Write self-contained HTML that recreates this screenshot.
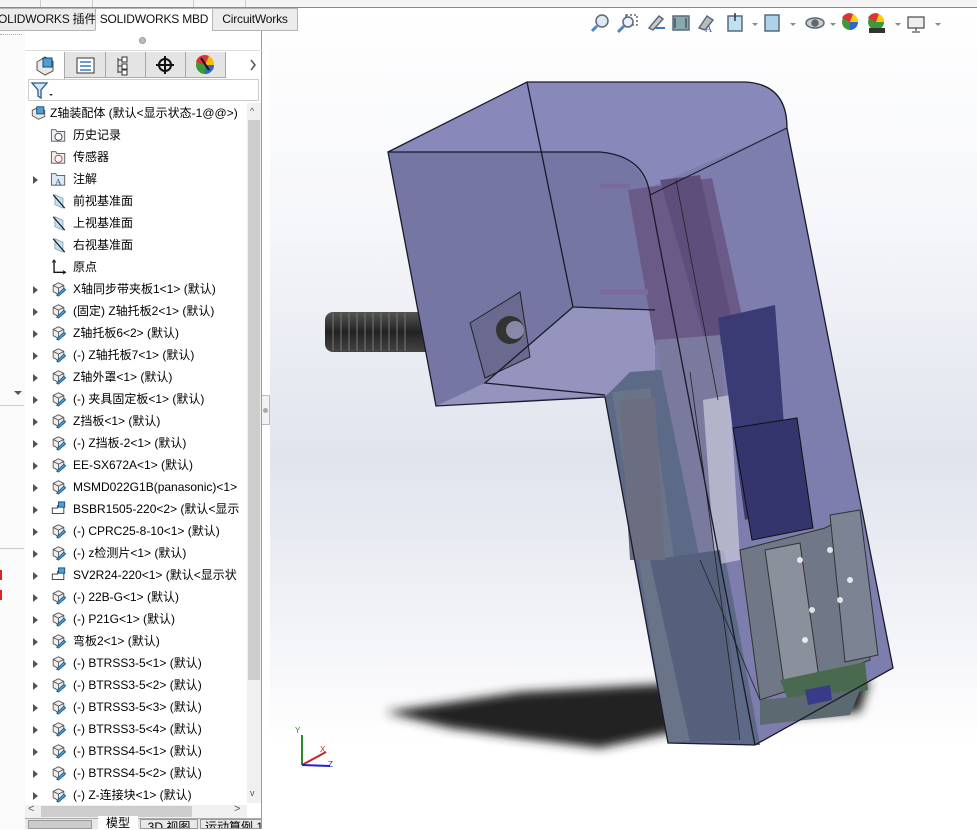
<!DOCTYPE html>
<html><head><meta charset="utf-8"><style>
*{margin:0;padding:0;box-sizing:border-box}
body{width:977px;height:829px;overflow:hidden;position:relative;background:#fff;font-family:"Liberation Sans","Noto Sans CJK SC",sans-serif;font-size:12px;color:#000}
.abs{position:absolute}
.tab{position:absolute;top:8px;height:23px;border:1px solid #b5b5b5;background:#ececec;font-size:12px;line-height:21px;text-align:center;color:#111;white-space:nowrap;overflow:hidden;letter-spacing:-0.2px}
.row{position:absolute;left:0;height:22px;line-height:22px;white-space:nowrap;font-size:12px}
.arr{position:absolute;left:33px;top:8px;width:0;height:0;border-left:5px solid #555;border-top:4px solid transparent;border-bottom:4px solid transparent}
.ic{position:absolute;top:3px;width:17px;height:16px}
.tx{position:absolute}
</style></head><body>
<div class="abs" style="left:270px;top:8px;width:707px;height:821px;background:linear-gradient(#ffffff 0%,#f6f7fa 25%,#e0e4ed 55%,#f2f3f7 75%,#ffffff 90%)"></div>
<div class="abs" style="left:0;top:0;width:977px;height:8px;background:#f4f4f4;border-bottom:1px solid #888"></div>
<div class="abs" style="left:40px;top:0;width:1px;height:7px;background:#ccc"></div>
<div class="abs" style="left:92px;top:0;width:1px;height:7px;background:#ccc"></div>
<div class="abs" style="left:193px;top:0;width:1px;height:7px;background:#ccc"></div>
<div class="abs" style="left:245px;top:0;width:1px;height:7px;background:#ccc"></div>
<div class="tab" style="left:-3px;width:99px;">OLIDWORKS 插件</div>
<div class="tab" style="left:95px;width:118px;background:#fff;border-bottom-color:#fff">SOLIDWORKS MBD</div>
<div class="tab" style="left:212px;width:86px;">CircuitWorks</div>

<svg class="abs" style="left:585px;top:10px" width="380" height="30">
 <g stroke="#5a6a7a" fill="none" stroke-width="1.5">
  <circle cx="17" cy="11" r="6" fill="#dfe7ef"/><line x1="12" y1="16" x2="7" y2="21" stroke="#4a8ac4" stroke-width="3"/>
  <rect x="41" y="5" width="11" height="10" stroke-dasharray="2 2"/><circle cx="43" cy="12" r="5" fill="#eef"/><line x1="39" y1="16" x2="33" y2="22" stroke="#4a8ac4" stroke-width="3"/>
  <path d="M64 18 L74 6 L78 9 L68 20Z" fill="#ccc"/><path d="M70 18 h10" stroke="#3a7ac4" stroke-width="2"/>
  <rect x="88" y="6" width="16" height="14" fill="#8aa"/><path d="M90 8 v10 M101 8 v10" stroke="#456"/>
  <path d="M114 18 L122 6 L128 10 L120 20Z" fill="#bbb"/><text x="120" y="22" font-size="10" fill="#3a5aa4" stroke="none" font-family="Liberation Serif">A</text>
  <rect x="143" y="6" width="14" height="15" fill="#bfe0f4"/><path d="M150 3 v8" stroke="#333"/>
  <rect x="180" y="5" width="14" height="16" fill="#aed2ec"/>
  <ellipse cx="230" cy="13" rx="9" ry="5" fill="#ccc"/><circle cx="230" cy="13" r="3" fill="#666"/>
 </g>
 <circle cx="265" cy="12" r="8" fill="#3c9a3c"/><path d="M265 12 L257 8 A8 8 0 0 1 268 4Z" fill="#d33"/><path d="M265 12 L268 4 A8 8 0 0 1 273 12Z" fill="#fc0"/><path d="M265 12 L273 12 A8 8 0 0 1 265 20Z" fill="#36c"/>
 <circle cx="291" cy="12" r="8" fill="#3c9a3c"/><path d="M291 12 L283 8 A8 8 0 0 1 294 4Z" fill="#d33"/><path d="M291 12 L294 4 A8 8 0 0 1 299 12Z" fill="#fc0"/><rect x="284" y="18" width="16" height="5" fill="#333"/>
 <rect x="323" y="7" width="16" height="11" fill="#eee" stroke="#555" stroke-width="1.3"/><path d="M331 18 v3 M327 22 h8" stroke="#555" stroke-width="1.3"/>
 <g fill="#888"><path d="M167 13 l3 3 3-3z"/><path d="M205 13 l3 3 3-3z"/><path d="M245 13 l3 3 3-3z"/><path d="M310 13 l3 3 3-3z"/><path d="M350 13 l3 3 3-3z"/></g>
</svg>

<div class="abs" style="left:0;top:31px;width:25px;height:798px;background:#fafafa"></div>
<div class="abs" style="left:0;top:34px;width:22px;height:1px;border-top:1px dotted #aaa"></div>
<div class="abs" style="left:0;top:405px;width:24px;height:1px;background:#ccc"></div>
<div class="abs" style="left:0;top:548px;width:24px;height:1px;background:#ccc"></div>
<div class="abs" style="left:14px;top:391px;border-left:4px solid transparent;border-right:4px solid transparent;border-top:4px solid #555"></div>
<div class="abs" style="left:0;top:570px;width:2px;height:10px;background:#d22"></div>
<div class="abs" style="left:0;top:590px;width:2px;height:10px;background:#d22"></div>

<div class="abs" style="left:25px;top:31px;width:237px;height:798px;background:#fff;border-right:1px solid #999"></div>
<div class="abs" style="left:139px;top:37px;width:7px;height:7px;border-radius:50%;background:#bbb;border:1px solid #999"></div>
<div class="abs" style="left:25px;top:50px;width:237px;height:1px;background:#ddd"></div>
<div class="abs" style="left:25px;top:52px;width:200px;height:26px;background:#e4e4e4;border-bottom:1px solid #aaa"></div>
<div class="abs" style="left:25px;top:52px;width:40px;height:27px;background:#fff;border-right:1px solid #aaa"></div>
<div class="abs" style="left:105px;top:52px;width:1px;height:26px;background:#aaa"></div>
<div class="abs" style="left:145px;top:52px;width:1px;height:26px;background:#aaa"></div>
<div class="abs" style="left:185px;top:52px;width:1px;height:26px;background:#aaa"></div>
<div class="abs" style="left:225px;top:52px;width:1px;height:26px;background:#aaa"></div>
<svg class="abs" style="left:25px;top:52px" width="237" height="26">
 <path d="M12 10 L20 5 L28 9 L28 19 L20 23 L12 18Z" fill="#e8e8e8" stroke="#555"/><rect x="18" y="6" width="9" height="9" fill="#4aa0d8" stroke="#246"/>
 <rect x="52" y="6" width="17" height="15" fill="#fff" stroke="#333"/><path d="M55 10h11M55 14h11M55 18h11" stroke="#3a7ac4" stroke-width="1.5"/>
 <path d="M93 6 v15 M93 8 h5 M93 14 h5 M93 20h5" stroke="#333" fill="none"/><rect x="97" y="5" width="5" height="5" fill="#fff" stroke="#333"/><rect x="97" y="12" width="5" height="5" fill="#fff" stroke="#333"/><rect x="97" y="18" width="5" height="5" fill="#fff" stroke="#333"/>
 <circle cx="140" cy="13" r="6" fill="none" stroke="#111" stroke-width="2"/><path d="M140 4v18M131 13h18" stroke="#111" stroke-width="2"/>
 <circle cx="180" cy="13" r="9" fill="#3a9a3a"/><path d="M180 13 L171 10 A9 9 0 0 1 184 4Z" fill="#d33"/><path d="M180 13 L184 4 A9 9 0 0 1 189 13Z" fill="#fb0"/><path d="M180 13L189 13A9 9 0 0 1 180 22Z" fill="#36c"/><path d="M176 6 l8 12" stroke="#111" stroke-width="2"/>
 <path d="M226 8 l4 5 -4 5" stroke="#555" fill="none" stroke-width="1.5"/>
</svg>
<div class="abs" style="left:28px;top:79px;width:231px;height:22px;border:1px solid #ccc;background:#fff"></div>
<svg class="abs" style="left:30px;top:81px" width="25" height="20"><path d="M2 2 H17 L11 9 V17 L8 15 V9Z" fill="#cfe8f8" stroke="#2a5a8a" stroke-width="1.3"/><path d="M19 13 l2 2 2-2z" fill="#333"/></svg>

<div class="abs" style="left:247px;top:103px;width:14px;height:700px;background:#f0f0f0"></div>
<div class="abs" style="left:248px;top:120px;width:12px;height:560px;background:#cdcdcd"></div>
<div class="abs" style="left:250px;top:106px;font-size:9px;color:#555">^</div>
<div class="abs" style="left:250px;top:788px;font-size:9px;color:#555">v</div>
<div class="abs" style="left:25px;top:805px;width:222px;height:13px;background:#f0f0f0"></div>
<div class="abs" style="left:41px;top:806px;width:151px;height:11px;background:#cdcdcd"></div>
<div class="abs" style="left:28px;top:803px;font-size:11px;color:#555">&lt;</div>
<div class="abs" style="left:234px;top:803px;font-size:11px;color:#555">&gt;</div>
<div class="abs" style="left:25px;top:818px;width:237px;height:11px;background:#e8e8e8;border-top:1px solid #aaa"></div>
<div class="abs" style="left:28px;top:820px;width:64px;height:9px;background:#ccc;border:1px solid #999"></div>
<div class="abs" style="left:98px;top:816px;width:40px;height:13px;background:#fff;font-size:12px;line-height:14px;text-align:center">模型</div>
<div class="abs" style="left:140px;top:819px;width:58px;height:10px;border:1px solid #999;font-size:12px;line-height:14px;text-align:center;overflow:hidden">3D 视图</div>
<div class="abs" style="left:200px;top:819px;width:62px;height:10px;border:1px solid #999;font-size:12px;line-height:14px;padding-left:4px;overflow:hidden;white-space:nowrap">运动算例 1</div>
<div class="abs" style="left:262px;top:395px;width:8px;height:30px;background:#f2f2f2;border:1px solid #bbb;border-left:none"></div>
<div class="abs" style="left:263px;top:408px;width:5px;height:5px;border-radius:50%;background:#aaa"></div>

<div id="tree" class="abs" style="left:0;top:102px;width:247px;height:702px;overflow:hidden">
<svg width="0" height="0" style="position:absolute"><defs>
<g id="part"><path d="M3 5 L9 2 L15 5 L15 12 L9 15 L3 12Z" fill="#eee" stroke="#555"/><path d="M3 5 L9 8 L15 5 M9 8 V15" stroke="#555" fill="none"/><path d="M7 16 L15 8 L17 10 L9 17Z" fill="#4aa8d8" stroke="#1a5a8a"/></g>
<g id="sub"><path d="M2 14 V8 H8 V5 H15 V14Z" fill="#fff" stroke="#333"/><rect x="9" y="1" width="7" height="6" fill="#4aa0d8" stroke="#1a4a7a"/></g>
<g id="plane"><path d="M5 2 L14 6 L14 17 L5 13Z" fill="#c8e0ee" stroke="#8ab"/><path d="M3 2 L16 17" stroke="#111" stroke-width="1.3"/></g>
</defs></svg>
</div>
<script>
var rows=[
["asm","Z轴装配体 (默认<显示状态-1@@>)",0],
["hist","历史记录",0],["sens","传感器",0],["ann","注解",1],
["plane","前视基准面",0],["plane","上视基准面",0],["plane","右视基准面",0],["orig","原点",0],
["part","X轴同步带夹板1<1> (默认)",1],["part","(固定) Z轴托板2<1> (默认)",1],["part","Z轴托板6<2> (默认)",1],
["part","(-) Z轴托板7<1> (默认)",1],["part","Z轴外罩<1> (默认)",1],["part","(-) 夹具固定板<1> (默认)",1],
["part","Z挡板<1> (默认)",1],["part","(-) Z挡板-2<1> (默认)",1],["part","EE-SX672A<1> (默认)",1],
["part","MSMD022G1B(panasonic)<1>",1],["sub","BSBR1505-220<2> (默认<显示",1],["part","(-) CPRC25-8-10<1> (默认)",1],
["part","(-) z检测片<1> (默认)",1],["sub","SV2R24-220<1> (默认<显示状",1],["part","(-) 22B-G<1> (默认)",1],
["part","(-) P21G<1> (默认)",1],["part","弯板2<1> (默认)",1],["part","(-) BTRSS3-5<1> (默认)",1],
["part","(-) BTRSS3-5<2> (默认)",1],["part","(-) BTRSS3-5<3> (默认)",1],["part","(-) BTRSS3-5<4> (默认)",1],
["part","(-) BTRSS4-5<1> (默认)",1],["part","(-) BTRSS4-5<2> (默认)",1],["part","(-) Z-连接块<1> (默认)",1]];
var h="";
function esc(s){return s.replace(/</g,"&lt;").replace(/>/g,"&gt;");}
rows.forEach(function(r,i){
 var y=i*22;var icx=r[0]=="asm"?30:50;var tx=r[0]=="asm"?50:73;
 var ic="";
 if(r[0]=="part")ic='<use href="#part"/>';
 else if(r[0]=="sub")ic='<use href="#sub"/>';
 else if(r[0]=="plane")ic='<use href="#plane"/>';
 else if(r[0]=="asm")ic='<path d="M2 6 L8 3 L16 6 L16 13 L9 16 L2 12Z" fill="#e8e8e8" stroke="#555"/><rect x="7" y="2" width="8" height="8" fill="#4aa0d8" stroke="#246"/>';
 else if(r[0]=="orig")ic='<path d="M4 2 V15 H16" stroke="#111" stroke-width="1.5" fill="none"/><path d="M2 4 L4 1 L6 4 M14 13 L17 15 L14 17" stroke="#111" fill="none"/>';
 else if(r[0]=="ann")ic='<path d="M1 3 H6 L7 5 H16 V16 H1Z" fill="#dceaf4" stroke="#555"/><text x="5" y="15" font-size="10" font-family="Liberation Serif" fill="#1a4a8a">A</text>';
 else ic='<path d="M1 3 H6 L7 5 H16 V16 H1Z" fill="#eee" stroke="#555"/><circle cx="9" cy="11" r="4" fill="#fff" stroke="'+(r[0]=="sens"?"#c33":"#345")+'"/>';
 h+='<div class="row" style="top:'+y+'px;width:247px">'+(r[2]?'<div class="arr"></div>':'')+
 '<svg class="ic" style="left:'+icx+'px" viewBox="0 0 18 18" width="17" height="17">'+ic+'</svg><span class="tx" style="left:'+tx+'px">'+esc(r[1])+'</span></div>';
});
document.getElementById("tree").insertAdjacentHTML("beforeend",h);
</script>

<svg class="abs" style="left:270px;top:31px" width="707" height="798" viewBox="270 31 707 798">
<defs><filter id="bl" x="-20%" y="-50%" width="140%" height="200%"><feGaussianBlur stdDeviation="5"/></filter>
<linearGradient id="scr" x1="0" y1="0" x2="0" y2="1"><stop offset="0" stop-color="#555"/><stop offset=".5" stop-color="#222"/><stop offset="1" stop-color="#444"/></linearGradient></defs>
<path d="M385 712 L520 692 L700 682 L870 680 L860 712 L720 722 L600 748 L520 738 L450 728Z" fill="#222" filter="url(#bl)"/>
<rect x="325" y="312" width="110" height="40" rx="8" fill="url(#scr)"/>
<g stroke="#777" stroke-width="1"><path d="M333 313v38M341 313v38M349 313v38M357 313v38M365 313v38M373 313v38M381 313v38M389 313v38M397 313v38M405 313v38"/></g>
<path d="M388 152 L527 82 L745 82 Q787 84 787 128 L893 668 L755 745 L668 743 L605 397 L436 406Z" fill="#7e7eae"/>
<path d="M388 152 L527 82 L745 82 Q787 84 787 128 L648 188 Q630 152 600 152Z" fill="#8888ba"/>
<path d="M388 152 L600 152 Q640 156 650 195 L655 380 L605 395 L436 406Z" fill="#7676a4"/>
<path d="M485 383 L573 307 L655 310 L655 380 L605 395 L436 406Z" fill="#9494be"/>
<!-- internal components -->
<path d="M628 190 L712 178 L745 330 L720 345 L655 345Z" fill="#6a5a88"/>
<path d="M660 180 L700 175 L735 335 L705 340Z" fill="#5d4e7c"/>
<path d="M630 372 L690 368 L760 745 L668 743 L605 397Z" fill="#5c6a88"/>
<path d="M612 392 L650 388 L700 740 L668 743Z" fill="#6a7488"/>
<path d="M655 340 L720 335 L735 545 L700 560Z" fill="#7a7a9e"/>
<path d="M703 400 L730 395 L740 560 L715 565Z" fill="#d8d8e8" opacity=".6"/>
<path d="M718 318 L775 305 L790 505 L745 520Z" fill="#3a3a74"/>
<path d="M733 428 L797 418 L813 528 L752 540Z" fill="#35356e" stroke="#111"/>
<path d="M740 550 L825 528 L850 515 L870 660 L790 690 L760 700Z" fill="#707888" stroke="#333"/>
<path d="M765 550 L800 543 L820 685 L785 692Z" fill="#8a909c" stroke="#333"/>
<path d="M830 515 L860 510 L878 655 L845 662Z" fill="#7c8494" stroke="#333"/>
<path d="M780 680 L865 662 L868 690 L790 705Z" fill="#4a6a50"/>
<path d="M760 700 L860 690 L850 715 L760 725Z" fill="#5a6a70"/>
<path d="M805 690 L830 685 L832 700 L808 705Z" fill="#3a3a8a"/>
<path d="M650 560 L720 550 L740 740 L690 742Z" fill="#55607c"/>
<path d="M620 400 L655 398 L665 560 L630 560Z" fill="#6a6e80"/>
<g fill="#fff" opacity=".8"><circle cx="800" cy="560" r="3"/><circle cx="812" cy="610" r="3"/><circle cx="830" cy="550" r="3"/><circle cx="840" cy="600" r="3"/><circle cx="805" cy="640" r="3"/><circle cx="850" cy="580" r="3"/></g>
<g stroke="#222" stroke-width=".8" fill="none"><path d="M676 180 L718 400 M690 372 L740 740 M700 560 L760 700"/></g>
<path d="M470 323 L520 292 L530 357 L485 378Z" fill="#6a6a90" stroke="#222"/>
<circle cx="510" cy="330" r="14" fill="#333"/><circle cx="515" cy="330" r="9" fill="#8888a8"/>
<path d="M600 186 h30 M600 292 h48" stroke="#7a6a9a" stroke-width="5"/>
<g fill="none" stroke="#1a1a2a" stroke-width="1.3">
<path d="M388 152 L527 82 L745 82 Q787 84 787 128 L893 668 L755 745 L668 743 L605 397 L436 406 Z"/>
<path d="M388 152 L600 152 Q645 156 650 195 L755 745"/>
<path d="M527 82 L573 307 L655 310"/>
<path d="M573 307 L485 383 L605 395"/>
<path d="M650 195 L787 128" stroke-width="1"/>
</g>
<path d="M302 765 V735" stroke="#2a8a2a" stroke-width="2"/>
<path d="M302 765 L326 752" stroke="#c22" stroke-width="2"/>
<path d="M302 765 L330 766" stroke="#22c" stroke-width="2"/>
<text x="295" y="733" font-size="8" fill="#2a8a2a">Y</text><text x="320" y="752" font-size="8" fill="#c22">X</text><text x="328" y="767" font-size="8" fill="#22c">Z</text>
</svg>
</body></html>
